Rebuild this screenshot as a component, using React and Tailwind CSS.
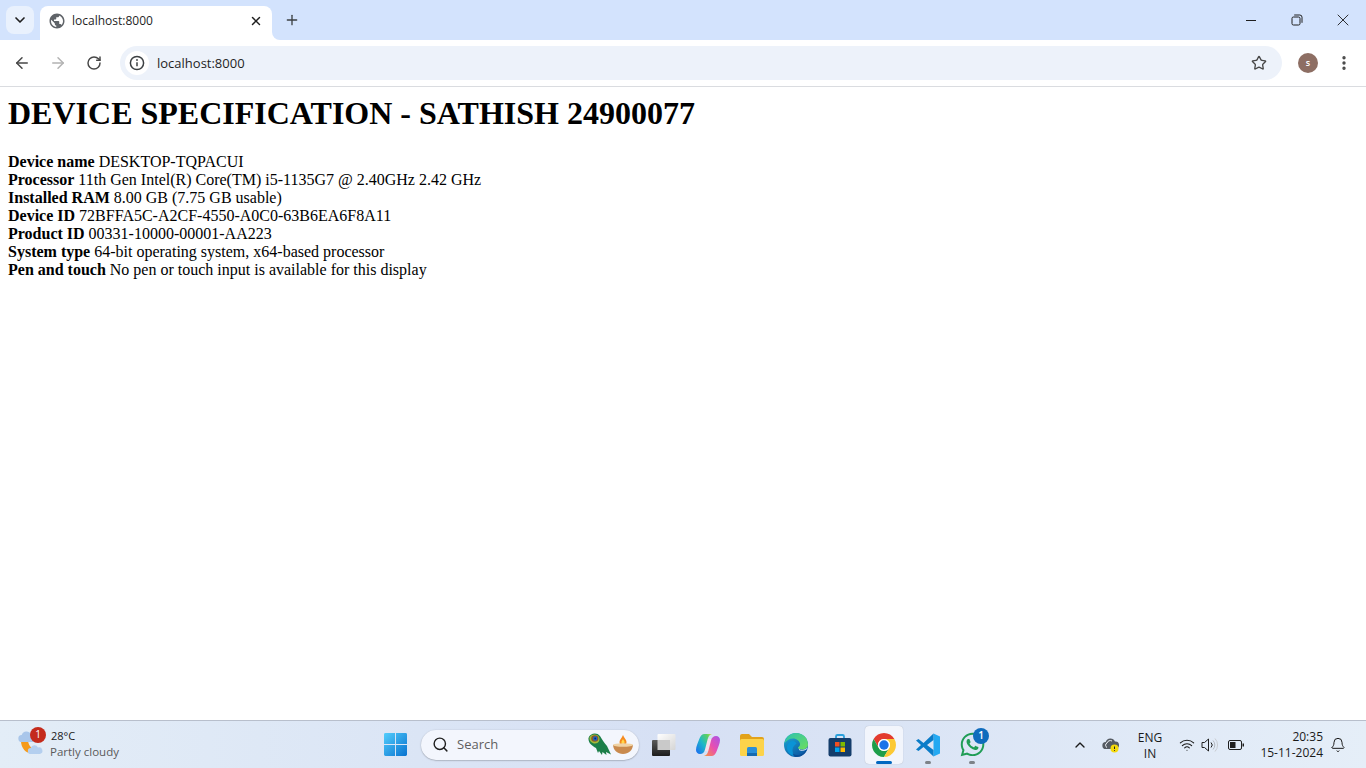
import { ArrowLeft, ArrowRight, RotateCw, Star, EllipsisVertical, X, Plus, ChevronDown, ChevronUp, Search, Bell, Wifi } from 'lucide-react';
import { FaWhatsapp } from 'react-icons/fa';

const specs = [
  ['Device name', 'DESKTOP-TQPACUI'],
  ['Processor', '11th Gen Intel(R) Core(TM) i5-1135G7 @ 2.40GHz 2.42 GHz'],
  ['Installed RAM', '8.00 GB (7.75 GB usable)'],
  ['Device ID', '72BFFA5C-A2CF-4550-A0C0-63B6EA6F8A11'],
  ['Product ID', '00331-10000-00001-AA223'],
  ['System type', '64-bit operating system, x64-based processor'],
  ['Pen and touch', 'No pen or touch input is available for this display'],
];

function GlobeIcon() {
  return (
    <svg width="18" height="18" viewBox="0 0 24 24" fill="#5f6368">
      <path d="M12 2C6.48 2 2 6.48 2 12s4.48 10 10 10 10-4.48 10-10S17.52 2 12 2zm-1 17.93c-3.95-.49-7-3.85-7-7.93 0-.62.08-1.21.21-1.79L9 15v1c0 1.1.9 2 2 2v1.93zm6.9-2.54c-.26-.81-1-1.39-1.9-1.39h-1v-3c0-.55-.45-1-1-1H8v-2h2c.55 0 1-.45 1-1V7h2c1.1 0 2-.9 2-2v-.41c2.93 1.19 5 4.06 5 7.41 0 2.08-.8 3.97-2.1 5.39z" />
    </svg>
  );
}

function InfoIcon() {
  return (
    <svg width="16" height="16" viewBox="0 0 16 16" fill="none" stroke="#3c4043" strokeWidth="1.5">
      <circle cx="8" cy="8" r="6.6" />
      <path d="M8 7.2v4" />
      <circle cx="8" cy="5" r="0.9" fill="#3c4043" stroke="none" />
    </svg>
  );
}

function RestoreIcon() {
  return (
    <svg width="12" height="12" viewBox="0 0 12 12" fill="none" stroke="#1f1f1f" strokeWidth="1">
      <rect x="1" y="3" width="8" height="8" rx="1.4" />
      <path d="M3.2 1h5.6A2.2 2.2 0 0 1 11 3.2v5.6" />
    </svg>
  );
}

function WeatherIcon() {
  return (
    <svg width="28" height="28" viewBox="0 0 28 28">
      <path d="M4 10C4 17 9 22.500 15 22.500c3 0 5.500-1 7.500-3.500-6 1-10.500-3-11.500-9z" fill="#f59a1b" />
      <path d="M5 11a3.500 3.500 0 0 1-.3-7A5 5 0 0 1 14 3.500a3.800 3.800 0 0 1 2 7.500z" fill="#a9c6ea" />
      <path d="M14 23a3 3 0 0 1-.3-6A4 4 0 0 1 21 16.500a3.200 3.200 0 0 1 2 6.500z" fill="#b4cfef" />
    </svg>
  );
}

function WindowsLogo() {
  return (
    <svg width="23" height="23" viewBox="0 0 24 24" className="mr-[1px]">
      <defs>
        <linearGradient id="winTile" x1="0" y1="0" x2="1" y2="1">
          <stop offset="0" stopColor="#52cdfc" />
          <stop offset="1" stopColor="#0872cf" />
        </linearGradient>
      </defs>
      <path d="M0 1.500A1.500 1.500 0 0 1 1.500 0h10v11.500H0zM12.500 0h10A1.500 1.500 0 0 1 24 1.500v10H12.500zM0 12.500h11.500V24h-10A1.500 1.500 0 0 1 0 22.500zM12.500 12.500H24v10a1.500 1.500 0 0 1-1.500 1.500h-10z" fill="url(#winTile)" />
    </svg>
  );
}

function FeatherIcon() {
  return (
    <svg width="24" height="24" viewBox="0 0 24 24">
      <path d="M.5 5C2 0 9-1 12 3c2 3 4 7 7 10l4 8.500-5-2.500.5 3-4-3-.5 3-3-4-1 2-2-5C4 13 0 10 .5 5z" fill="#1c7f49" />
      <path d="M1.500 4.500C3 1 9 .5 11 4c1.500 3-.5 6.500-4 6.500-3 0-6-2.500-5.500-6z" fill="#a5b83c" />
      <ellipse cx="6.800" cy="5.500" rx="3.600" ry="3.200" fill="#8a5a24" />
      <circle cx="7.200" cy="5.500" r="2.200" fill="#1c63c7" />
      <circle cx="7.200" cy="5.500" r="0.900" fill="#0b2a6b" />
    </svg>
  );
}

function DiyaIcon() {
  return (
    <svg width="22" height="22" viewBox="0 0 22 22">
      <path d="M11 1c1 3 3.500 4.500 3.500 7a3.500 3.500 0 0 1-7 0C7.500 5.500 10 4 11 1z" fill="#f58a1f" />
      <path d="M11 5c.6 1.500 1.600 2 1.600 3.300a1.600 1.600 0 0 1-3.200 0C9.400 7 10.400 6.500 11 5z" fill="#ffd84a" />
      <path d="M1 11c3-1.500 17-1.500 20 0-.5 5.500-4.500 9-10 9S1.500 16.500 1 11z" fill="#c98a4e" />
      <ellipse cx="11" cy="11" rx="10" ry="1.800" fill="#f0d3a5" />
    </svg>
  );
}

function TaskViewIcon() {
  return (
    <svg width="24" height="24" viewBox="0 0 24 24">
      <defs>
        <linearGradient id="tvBack" x1="0" y1="0" x2="1" y2="1">
          <stop offset="0" stopColor="#ffffff" />
          <stop offset="1" stopColor="#d5d5d5" />
        </linearGradient>
        <linearGradient id="tvFront" x1="0" y1="0" x2="0" y2="1">
          <stop offset="0" stopColor="#5a5a5a" />
          <stop offset="1" stopColor="#1c1c1c" />
        </linearGradient>
      </defs>
      <rect x="5.500" y="1" width="18" height="16" rx="1" fill="url(#tvBack)" />
      <rect x="0" y="7" width="18" height="16" rx="1" fill="url(#tvFront)" />
      <rect x="5.500" y="7" width="12.500" height="10" fill="#c9c9c9" />
    </svg>
  );
}

function CopilotIcon() {
  return (
    <svg width="24" height="22" viewBox="0 0 24 22">
      <defs>
        <linearGradient id="copA" x1="0" y1="0.9" x2="1" y2="0">
          <stop offset="0" stopColor="#1b6ff0" />
          <stop offset="0.45" stopColor="#1fb8c8" />
          <stop offset="0.8" stopColor="#5cd060" />
          <stop offset="1" stopColor="#d8e04a" />
        </linearGradient>
        <linearGradient id="copB" x1="0" y1="1" x2="1" y2="0">
          <stop offset="0" stopColor="#a855e8" />
          <stop offset="0.5" stopColor="#e84fb0" />
          <stop offset="1" stopColor="#f8963a" />
        </linearGradient>
      </defs>
      <rect x="8" y="5" width="8" height="12" fill="#f8dfe8" />
      <path d="M8.500 0H16c-2.500.5-3.500 2.500-4.300 5L9 15.500C8.300 18.500 6.500 20 4 20 1.500 20 0 18.300 0 16c0-3.500 2-7.500 3.500-11.500C4.500 1.800 6 0 8.500 0z" fill="url(#copA)" />
      <path d="M8.500 0H16c-2.500.5-3.500 2.500-4.300 5L9 15.500C8.300 18.500 6.500 20 4 20 1.500 20 0 18.300 0 16c0-3.500 2-7.500 3.500-11.500C4.500 1.800 6 0 8.500 0z" fill="url(#copB)" transform="rotate(180 12 11)" />
    </svg>
  );
}

function ExplorerIcon() {
  return (
    <svg width="26" height="24" viewBox="0 0 26 24">
      <path d="M1 3a2 2 0 0 1 2-2h7l3 3h10a2 2 0 0 1 2 2v4H1z" fill="#e2a21a" />
      <rect x="1" y="6" width="24" height="17" rx="1.500" fill="#fcd34a" />
      <path d="M8 15.500A1.500 1.500 0 0 1 9.500 14h7a1.500 1.500 0 0 1 1.500 1.500V23H8z" fill="#2a8fd8" />
      <rect x="8" y="20" width="10" height="3" fill="#1569b0" />
    </svg>
  );
}

function EdgeIcon() {
  return (
    <svg width="24" height="24" viewBox="0 0 24 24">
      <defs>
        <linearGradient id="edgeBlue" x1="0" y1="0" x2="0.6" y2="1">
          <stop offset="0" stopColor="#1eb0d8" />
          <stop offset="1" stopColor="#0c59a4" />
        </linearGradient>
        <linearGradient id="edgeGreen" x1="0" y1="0" x2="1" y2="1">
          <stop offset="0" stopColor="#2bc2b0" />
          <stop offset="1" stopColor="#6ede5c" />
        </linearGradient>
      </defs>
      <circle cx="12" cy="12" r="12" fill="url(#edgeBlue)" />
      <path d="M12 0c7 0 12 5 12 11.500 0 3.500-3 5-6 5-2 0-4-.7-4-1.700 0-1 2-1 2-3.800C16 8 12.500 5.500 9 5.500 5.500 5.500 2 7.500 .5 10.500 1.500 4.500 6 0 12 0z" fill="url(#edgeGreen)" />
      <path d="M9 8c-3.500 0-6 3-6 7 0 3.500 3 7.500 8 8.500-1.500-1.500-2.500-4-2.500-6.500 0-3 2-5 4-6.500C11.500 9 10.500 8 9 8z" fill="#0a94d6" />
      <path d="M23.500 15.500c-1.500 5-6 8.500-11.500 8.500-1.500-.2-3-1.500-3.500-3.500 2 1.500 5 2 8 1 3-1 5-3.500 7-6z" fill="#0b4f97" />
      <path d="M15 16.500c2 1.500 5.500 1 8-1" fill="none" stroke="#d6e1f4" strokeWidth="1" />
    </svg>
  );
}

function StoreIcon() {
  return (
    <svg width="24" height="24" viewBox="0 0 24 24">
      <path d="M8 6V3.500A1.500 1.500 0 0 1 9.500 2h5A1.500 1.500 0 0 1 16 3.500V6" fill="none" stroke="#2aa0dc" strokeWidth="1.800" />
      <rect x="0.500" y="5" width="23" height="18.500" rx="2" fill="#143d6b" />
      <rect x="7" y="9" width="4.500" height="4.500" fill="#f25022" />
      <rect x="12.500" y="9" width="4.500" height="4.500" fill="#7fba00" />
      <rect x="7" y="14.500" width="4.500" height="4.500" fill="#00a4ef" />
      <rect x="12.500" y="14.500" width="4.500" height="4.500" fill="#ffb900" />
    </svg>
  );
}

function ChromeIcon() {
  return (
    <svg width="24" height="24" viewBox="0 0 24 24">
      <path d="M1.610 6A12 12 0 0 1 22.390 6L12 6A6 6 0 0 0 6.800 15z" fill="#e33b2e" />
      <path d="M1.610 6A12 12 0 0 0 12 24L17.200 15A6 6 0 0 1 6.800 15z" fill="#1e9e4a" />
      <path d="M22.390 6A12 12 0 0 1 12 24L17.200 15A6 6 0 0 0 12 6z" fill="#fcc934" />
      <circle cx="12" cy="12" r="6" fill="#ffffff" />
      <circle cx="12" cy="12" r="4.700" fill="#1a73e8" />
    </svg>
  );
}

function VsCodeIcon() {
  return (
    <svg width="24" height="24" viewBox="0 0 24 24">
      <path d="M17.500 0.500 24 3.500v17l-6.500 3z" fill="#23a9f2" />
      <path d="M17.500 0.500 7.500 10 2.500 6 0 7.500 5 12 0 16.500 2.500 18l5-4 10 9.500V17l-6.500-5 6.500-5z" fill="#0a7cc8" />
    </svg>
  );
}

function TrayCloudIcon() {
  return (
    <svg width="18" height="18" viewBox="0 0 18 18">
      <path d="M4 13a3.500 3.500 0 0 1-.3-7A5 5 0 0 1 13 5.500 3.500 3.500 0 0 1 14 12.500V13z" fill="#555b63" />
      <path d="M5 11.500a2.500 2.500 0 0 1 0-4.500A3.500 3.500 0 0 1 10 5" fill="none" stroke="#f2f5f9" strokeWidth="1" />
      <circle cx="12.500" cy="12.500" r="4" fill="#f4d90b" />
      <path d="M12.500 10.500v2.500M12.500 14v.8" stroke="#222222" strokeWidth="1" />
    </svg>
  );
}

function SpeakerIcon() {
  return (
    <svg width="18" height="16" viewBox="0 0 18 16" fill="none" strokeWidth="1">
      <path d="M1 5.500h2.500L7.500 2v12l-4-3.500H1z" stroke="#1f1f1f" />
      <path d="M10 5.500a3.500 3.500 0 0 1 0 5" stroke="#1f1f1f" />
      <path d="M12 3.500a6.500 6.500 0 0 1 0 9" stroke="#b5b9bf" />
      <path d="M14 1.500a9.500 9.500 0 0 1 0 13" stroke="#c9ccd1" />
    </svg>
  );
}

function BatteryIcon() {
  return (
    <svg width="16" height="10" viewBox="0 0 16 10" fill="none">
      <rect x="0.500" y="0.500" width="13" height="9" rx="1.500" stroke="#1f1f1f" />
      <rect x="2" y="2" width="5.500" height="6" fill="#1f1f1f" />
      <rect x="14.500" y="3.500" width="1.500" height="3" fill="#1f1f1f" />
    </svg>
  );
}

function TaskbarApp({ children, active, dot, badge }) {
  return (
    <div className={`relative flex h-[38px] w-[38px] items-center justify-center rounded ${active ? 'bg-[#f2f5fc] shadow-[0_0_1px_rgba(0,0,0,0.25)]' : ''}`}>
      {children}
      {badge && (
        <span className="absolute right-[2px] top-[2px] flex h-4 w-4 items-center justify-center rounded-full bg-[#0f6cbd] text-[10px] font-semibold text-white">
          {badge}
        </span>
      )}
      {active && <span className="absolute bottom-0 h-[3px] w-4 rounded-full bg-[#0067c0]" />}
      {dot && <span className="absolute bottom-0 h-[3px] w-[6px] rounded-full bg-[#7d8288]" />}
    </div>
  );
}

function AppCell({ children }) {
  return <div className="flex w-11 items-center justify-center">{children}</div>;
}

export default function App() {
  return (
    <div className="flex h-screen flex-col overflow-hidden bg-white font-['Open_Sans',sans-serif]">
      {/* chrome tab strip */}
      <div className="flex h-10 shrink-0 items-end bg-[#d3e3fd]">
        <div className="mb-[6px] ml-[6px] flex h-7 w-7 items-center justify-center rounded-lg bg-[#e9f1fd]">
          <ChevronDown size={16} strokeWidth={2.5} color="#1f1f1f" />
        </div>
        <div className="relative ml-[6px] flex h-[34px] w-[232px] items-center rounded-t-lg bg-white pb-1 pl-2 pr-2">
          <GlobeIcon />
          <span className="ml-[6px] flex-1 text-xs text-[#1f1f1f]">localhost:8000</span>
          <X size={14} strokeWidth={2.5} color="#1f1f1f" className="mr-[1px]" />
          <div className="absolute bottom-0 -right-2 h-2 w-2 bg-white">
            <div className="h-2 w-2 rounded-bl-lg bg-[#d3e3fd]" />
          </div>
        </div>
        <div className="mb-[12px] ml-3 flex h-4 w-4 items-center justify-center">
          <Plus size={16} strokeWidth={2} color="#3c4043" />
        </div>
        <div className="ml-auto flex h-10 items-center text-[#1f1f1f]">
          <div className="flex w-[46px] justify-center"><span className="h-px w-[10px] bg-[#1f1f1f]" /></div>
          <div className="flex w-[46px] justify-center"><RestoreIcon /></div>
          <div className="flex w-[46px] justify-center"><X size={20} strokeWidth={1.1} /></div>
        </div>
      </div>

      {/* address bar */}
      <div className="flex h-[47px] shrink-0 items-center border-b border-[#dadce0] bg-white">
        <div className="ml-[12px] flex w-[20px] justify-center"><ArrowLeft size={18} strokeWidth={2} color="#474747" /></div>
        <div className="ml-4 flex w-[20px] justify-center"><ArrowRight size={18} strokeWidth={2} color="#b3b3b3" /></div>
        <div className="ml-4 flex w-[20px] justify-center"><RotateCw size={16} strokeWidth={2.2} color="#474747" /></div>
        <div className="ml-4 flex h-[34px] flex-1 items-center rounded-full bg-[#edf2fa] pl-[5px] pr-[15px]">
          <div className="flex h-6 w-6 items-center justify-center rounded-full bg-white"><InfoIcon /></div>
          <span className="ml-2 flex-1 pt-[2px] text-[13px] text-[#1f1f1f]">localhost:8000</span>
          <Star size={16} strokeWidth={2} color="#474747" />
        </div>
        <div className="ml-4 flex h-5 w-5 items-center justify-center rounded-full bg-[#8d6e63] text-[9px] font-semibold text-white">s</div>
        <div className="ml-[16px] mr-[12px] flex w-5 justify-center"><EllipsisVertical size={18} strokeWidth={2.5} color="#474747" /></div>
      </div>

      {/* page */}
      <main className="flex-1 p-2 font-['Liberation_Serif',serif] text-black">
        <h1 className="mb-[21px] text-[32px] font-bold leading-[37px]">DEVICE SPECIFICATION - SATHISH 24900077</h1>
        {specs.map(([label, value]) => (
          <div key={label} className="text-base leading-[18px]">
            <strong className="font-bold">{label}</strong> {value}
          </div>
        ))}
      </main>

      {/* windows taskbar */}
      <div className="flex h-12 shrink-0 items-center border-t border-[#b8bfcc] bg-gradient-to-r from-[#e3edf7] via-[#d6e0f4] to-[#e5eef8]">
        <div className="flex w-[374px] items-center pl-[17px]">
          <div className="relative">
            <WeatherIcon />
            <span className="absolute -right-[1px] -top-[4px] flex h-4 w-4 items-center justify-center rounded-full bg-[#c42b1c] text-[10px] text-white">1</span>
          </div>
          <div className="mb-[2px] ml-[6px] leading-4">
            <div className="text-[11px] leading-4 text-[#1a1a1a]">28°C</div>
            <div className="-ml-[1px] text-[11.5px] leading-4 text-[#5a5a5a]">Partly cloudy</div>
          </div>
        </div>

        <div className="flex items-center">
          <AppCell><WindowsLogo /></AppCell>
          <div className="ml-[3px] mr-[3px] flex h-[30px] w-[218px] items-center rounded-full bg-[#f3f6fd] pl-[11px] pr-[5px] shadow-[0_0.5px_1.5px_rgba(0,0,0,0.35)]">
            <Search size={17} strokeWidth={2} color="#1f1f1f" />
            <span className="ml-[8px] flex-1 text-[13px] text-[#5f5f5f]">Search</span>
            <FeatherIcon />
            <DiyaIcon />
          </div>
          <AppCell><TaskViewIcon /></AppCell>
          <AppCell><CopilotIcon /></AppCell>
          <AppCell><ExplorerIcon /></AppCell>
          <AppCell><EdgeIcon /></AppCell>
          <AppCell><StoreIcon /></AppCell>
          <AppCell><TaskbarApp active><ChromeIcon /></TaskbarApp></AppCell>
          <AppCell><TaskbarApp dot><VsCodeIcon /></TaskbarApp></AppCell>
          <AppCell><TaskbarApp dot badge="1"><FaWhatsapp size={27} color="#1f9d55" /></TaskbarApp></AppCell>
        </div>

        <div className="ml-auto mr-[13px] flex items-center text-xs text-[#1a1a1a]">
          <div className="flex w-8 justify-center"><ChevronUp size={16} strokeWidth={2} /></div>
          <div className="flex w-[30px] justify-center"><TrayCloudIcon /></div>
          <div className="w-12 pt-[2px] text-center leading-4"><div>ENG</div><div>IN</div></div>
          <div className="flex w-[26px] justify-center"><Wifi size={16} strokeWidth={1.6} /></div>
          <div className="flex w-5 justify-center"><SpeakerIcon /></div>
          <div className="flex w-8 justify-center"><BatteryIcon /></div>
          <div className="w-[71px] text-right leading-4"><div>20:35</div><div>15-11-2024</div></div>
          <div className="flex w-[30px] justify-center"><Bell size={16} strokeWidth={1.5} /></div>
        </div>
      </div>
    </div>
  );
}
